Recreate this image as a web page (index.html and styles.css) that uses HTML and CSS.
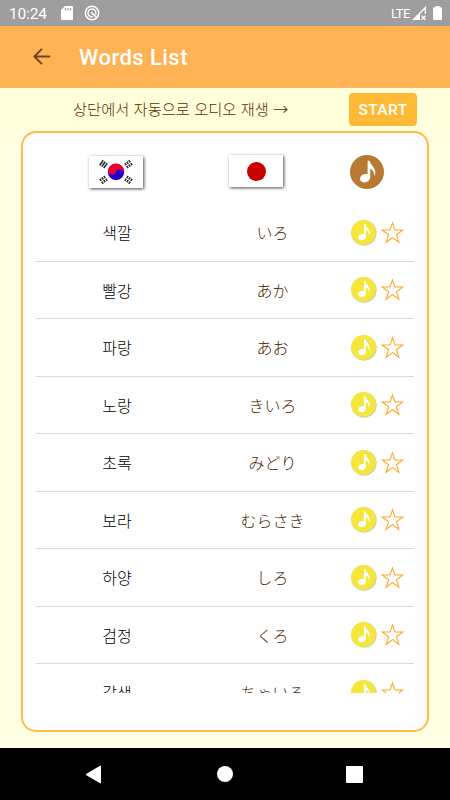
FILE: index.html
```
<!DOCTYPE html>
<html lang="ko">
<head>
<meta charset="utf-8">
<title>Words List</title>
<link rel="stylesheet" href="styles.css">
</head>
<body>
<svg class="defs" width="0" height="0">
  <symbol id="note" viewBox="0 0 34 34">
    <ellipse cx="15" cy="23.200" rx="5.200" ry="4.100" transform="rotate(-20 15 23.200)"/>
    <path d="M17.600 5.800h2.100c.4 3.600 5 6 5.600 10.700.2 1.900-.2 3.200-1.200 4.500.3-3.200-.9-5.600-3.900-7.400V23h-2.600z"/>
  </symbol>
  <symbol id="star" viewBox="0 0 24 24">
    <path d="M12 1.900l2.500 7.500h8.200l-6.600 4.900 2.500 7.900-6.600-4.800-6.600 4.800 2.500-7.900-6.600-4.900h8.200z" fill="none" stroke="#ffa726" stroke-width="1.100"/>
  </symbol>
</svg>
<header class="status">
  <span class="time">10:24</span>
  <svg class="sd" width="12" height="14" viewBox="0 0 12 14"><path d="M4 0h7q1 0 1 1v12q0 1-1 1H1q-1 0-1-1V4z" fill="#fff"/><path d="M4.500 2v2.600M7 2v2.600M9.500 2v2.600" stroke="#9e9e9e" stroke-width="1.200"/></svg>
  <svg class="sync" width="16" height="16" viewBox="0 0 16 16" fill="none" stroke="#fff"><circle cx="8" cy="8" r="6.700" stroke-width="1.600"/><path d="M11.600 9.600A4 4 0 1 0 4.600 10.200Q6.500 12.300 9 11.700" stroke-width="1.400"/><path d="M7 7.200l5 4.800" stroke-width="1.700"/></svg>
  <span class="lte">LTE</span>
  <svg class="signal" width="15" height="15" viewBox="0 0 15 15"><path d="M0 14L14 0v8h-1.300V3.200L8 8v6z" fill="#fff"/><path d="M9.500 9.700l4 4m0-4l-4 4" stroke="#fff" stroke-width="1.300"/></svg>
  <svg class="battery" width="9" height="14" viewBox="0 0 9 14"><path d="M2.500 0h4v1.300H8q1 0 1 1V13q0 1-1 1H1q-1 0-1-1V2.300q0-1 1-1h1.500z" fill="#fff"/></svg>
</header>
<nav class="appbar">
  <svg width="18" height="17" viewBox="0 0 18 17"><path d="M17.200 8.500H1.600M9 .8L1.300 8.500 9 16.200" fill="none" stroke="#6b461b" stroke-width="1.900"/></svg>
  <h1>Words List</h1>
</nav>
<section class="auto">
  <span class="hint">상단에서 자동으로 오디오 재생 →</span>
  <button class="start">START</button>
</section>
<main class="card">
  <div class="head">
    <div class="flag kr">
      <svg width="54" height="32" viewBox="0 0 54 32">
        <circle cx="27" cy="16" r="8.200" fill="#2400ce"/>
        <path d="M19.300 13.200A8.200 8.200 0 1 1 34.700 18.800A4.100 4.100 0 0 0 27 16A4.100 4.100 0 0 1 19.300 13.200z" fill="#f0002e"/>
        <g stroke="#222" stroke-width="1.500">
          <path d="M10.800 9.200l3.400-4.900M12.800 10.600l3.400-4.900M14.800 12l3.400-4.900"/>
          <path d="M43.200 9.200l-3.400-4.900M41.200 10.600l-3.400-4.900M39.200 12l-3.400-4.900" stroke-dasharray="2.600 .8"/>
          <path d="M10.800 22.800l3.400 4.900M12.800 21.400l3.400 4.900M14.800 20l3.400 4.900" stroke-dasharray="2.600 .8"/>
          <path d="M43.200 22.800l-3.400 4.900M41.200 21.400l-3.400 4.900M39.200 20l-3.400 4.900" stroke-dasharray="2.600 .8"/>
        </g>
      </svg>
    </div>
    <div class="flag jp"><i class="sun"></i></div>
    <svg class="sound" width="34" height="34"><circle cx="17" cy="17" r="17" fill="#b87932"/><use href="#note" fill="#fff"/></svg>
  </div>
  <ul class="list" id="list"></ul>
</main>
<footer class="navbar">
  <svg width="17" height="19" viewBox="0 0 17 19"><path d="M15.500 1v17L1 9.500z" fill="#fff" stroke="#fff" stroke-linejoin="round"/></svg>
  <i class="home"></i>
  <i class="recent"></i>
</footer>
<script src="script.js"></script>
</body>
</html>
```
FILE: styles.css
```
* { box-sizing: border-box; }
body {
  margin: 0;
  width: 450px;
  height: 800px;
  overflow: hidden;
  display: flex;
  flex-direction: column;
  background: linear-gradient(#ffffdc 88px, #ffffdc 125px, #ffffe4 155px);
  font-family: "Noto Sans CJK KR", sans-serif;
}
.defs { position: absolute; }
svg { display: block; flex: none; }
.status {
  height: 26px;
  flex: none;
  display: flex;
  align-items: center;
  padding: 0 8px 0 9px;
  background: #9e9e9e;
  color: #fff;
  font-family: Roboto, sans-serif;
}
.time { font-size: 15.5px; letter-spacing: -0.15px; width: 52px; margin-top: 2px; }
.sync { margin-left: 10.5px; }
.lte { margin-left: auto; margin-right: 2px; font-size: 13px; letter-spacing: -0.5px; }
.signal { margin-right: 6px; }
.appbar {
  height: 61.5px;
  flex: none;
  display: flex;
  align-items: center;
  gap: 28.5px;
  padding: 0 32.5px;
  background: #ffb354;
}
.appbar h1 {
  margin: 2px 0 0;
  color: #fff;
  font: 500 22px/30px Roboto, sans-serif;
  letter-spacing: 0.45px;
}
.auto {
  height: 43.5px;
  flex: none;
  display: flex;
  justify-content: space-between;
  padding: 5.5px 33px 0 73px;
}
.hint {
  color: #5e1f00;
  font-size: 15.3px;
  font-weight: 300;
  line-height: 30px;
  white-space: nowrap;
}
.start {
  width: 68px;
  height: 33px;
  padding: 1px 0 0;
  border: 0;
  border-radius: 4px;
  background: #ffba35;
  color: #fff;
  font: 500 15.5px/32px Roboto, sans-serif;
  letter-spacing: 0.4px;
}
.card {
  width: 408px;
  height: 600.5px;
  flex: none;
  margin-left: 21px;
  padding: 0 13px;
  border: 2px solid #ffba4a;
  border-radius: 15px;
  background: #fff;
}
.head {
  height: 71px;
  display: flex;
  align-items: flex-start;
  padding: 22px 0 0 53px;
}
.flag {
  width: 54px;
  height: 32px;
  background: #fff;
  box-shadow: 1px 1px 3px rgba(0, 0, 0, 0.7);
}
.kr { margin-top: 1px; }
.jp { margin-left: 86px; display: grid; place-items: center; }
.sun { width: 19px; height: 19px; border-radius: 50%; background: #c80000; }
.sound { margin-left: 67px; }
.list {
  height: 489px;
  margin: 0;
  padding: 0;
  overflow: hidden;
  list-style: none;
}
.row {
  height: 57.5px;
  display: grid;
  grid-template-columns: 162px 149px 67px;
  align-items: center;
  border-bottom: 1px solid #d9d9d9;
  text-align: center;
  font-size: 16px;
  font-weight: 300;
  line-height: 24px;
}
.ko { color: #000; }
.ja { color: #4e2600; font-family: "Noto Sans CJK JP", sans-serif; }
.actions { display: flex; align-items: center; gap: 5px; padding-left: 4px; }
.play {
  width: 25px;
  height: 25px;
  border-radius: 50%;
  background: #f5e63c;
  box-shadow: 0.5px 0.5px 1px rgba(0, 0, 0, 0.3);
}
.navbar {
  height: 52px;
  flex: none;
  margin-top: auto;
  display: flex;
  align-items: center;
  padding-left: 85px;
  background: #000;
}
.home {
  width: 16px;
  height: 16px;
  margin-left: 115px;
  border-radius: 50%;
  background: #fff;
}
.recent {
  width: 17px;
  height: 17px;
  margin-left: 113px;
  border-radius: 1px;
  background: #fff;
}
```
FILE: script.js
```
const words = [
  ["색깔", "いろ"],
  ["빨강", "あか"],
  ["파랑", "あお"],
  ["노랑", "きいろ"],
  ["초록", "みどり"],
  ["보라", "むらさき"],
  ["하양", "しろ"],
  ["검정", "くろ"],
  ["갈색", "ちゃいろ"]
];
document.getElementById("list").innerHTML = words.map(([ko, ja]) => `
  <li class="row">
    <span class="ko">${ko}</span>
    <span class="ja" lang="ja">${ja}</span>
    <span class="actions">
      <svg class="play" viewBox="0 0 34 34"><use href="#note" fill="#fff"/></svg>
      <svg width="23" height="23"><use href="#star"/></svg>
    </span>
  </li>`).join("");
```
